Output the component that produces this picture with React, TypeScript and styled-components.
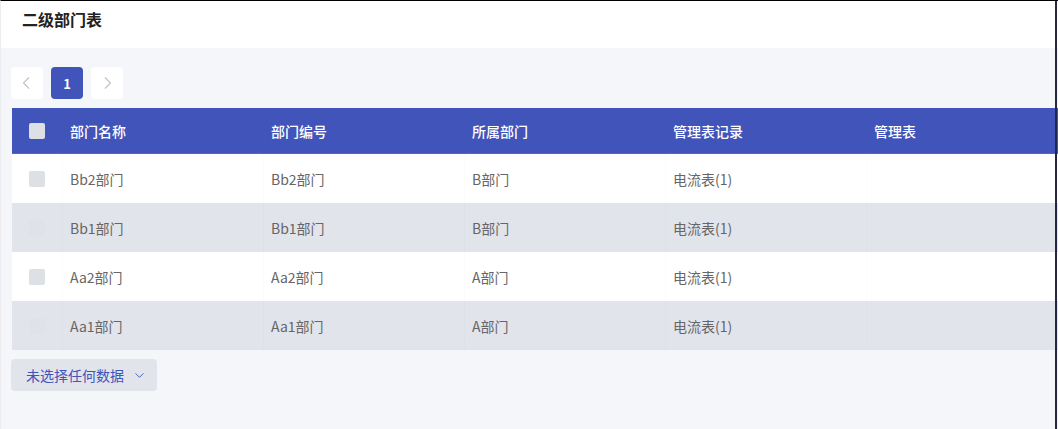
import styled, { createGlobalStyle } from "styled-components";

const GlobalStyle = createGlobalStyle`
  html, body {
    margin: 0;
    padding: 0;
    background: #f5f6fa;
  }
  body {
    font-family: "Noto Sans CJK SC", "Noto Sans", "Liberation Sans", sans-serif;
  }
  * { box-sizing: border-box; }
`;

type Row = { name: string; code: string; parent: string; record: string; table: string };

const rows: Row[] = [
    { name: "Bb2部门", code: "Bb2部门", parent: "B部门", record: "电流表(1)", table: "" },
    { name: "Bb1部门", code: "Bb1部门", parent: "B部门", record: "电流表(1)", table: "" },
    { name: "Aa2部门", code: "Aa2部门", parent: "A部门", record: "电流表(1)", table: "" },
    { name: "Aa1部门", code: "Aa1部门", parent: "A部门", record: "电流表(1)", table: "" },
];

const columns = ["部门名称", "部门编号", "所属部门", "管理表记录", "管理表"];

const Chevron = ({ dir, size = 12 }: { dir: "left" | "right" | "down"; size?: number }) => {
    const d = dir === "left" ? "M7.5 1.5 L3 6 L7.5 10.5" : dir === "right" ? "M4.5 1.5 L9 6 L4.5 10.5" : "M2 4 L6 8 L10 4";
    return (
        <svg width={size} height={size} viewBox="0 0 12 12" fill="none">
            <path d={d} stroke="currentColor" strokeWidth="1" strokeLinecap="round" strokeLinejoin="round"/>
        </svg>
    );
};

const App = () => {
    return (
        <Page>
            <GlobalStyle/>
            <Header>
                <Title>二级部门表</Title>
            </Header>
            <Body>
                <Pager>
                    <PageButton><Chevron dir="left" size={14}/></PageButton>
                    <PageButton isActive>1</PageButton>
                    <PageButton><Chevron dir="right" size={14}/></PageButton>
                </Pager>
                <TableWrap>
                    <HeadRow>
                        <CheckCell><Check/></CheckCell>
                        {columns.map(c => <HeadCell key={c}>{c}</HeadCell>)}
                    </HeadRow>
                    {rows.map((r, i) => (
                        <DataRow key={r.name} striped={i % 2 === 1}>
                            <CheckCell><Check faded={i % 2 === 1}/></CheckCell>
                            <Cell>{r.name}</Cell>
                            <Cell>{r.code}</Cell>
                            <Cell>{r.parent}</Cell>
                            <Cell>{r.record}</Cell>
                            <Cell>{r.table}</Cell>
                        </DataRow>
                    ))}
                </TableWrap>
                <SelectButton>
                    <span>未选择任何数据</span>
                    <Chevron dir="down" size={11}/>
                </SelectButton>
            </Body>
        </Page>
    );
}

export default App;


const Page = styled.div`
    width: 1058px;
    height: 429px;
    border-top: 1px solid #000;
    border-left: 1px solid #ececf0;
    overflow: hidden;
    position: relative;
    background: #f5f6fa;

    &::after {
        content: "";
        position: absolute;
        top: 0;
        right: 1px;
        width: 2px;
        height: 100%;
        background: #25263f;
    }
`;

const Header = styled.div`
    height: 47px;
    background: #fff;
    display: flex;
    align-items: center;
    padding-left: 21px;
    padding-bottom: 11px;
`;

const Title = styled.div`
    font-size: 16px;
    font-weight: 700;
    color: #222;
`;

const Body = styled.div`
    padding: 19px 0 0 10px;
`;

const Pager = styled.div`
    display: flex;
    gap: 8px;
`;

const PageButton = styled.div<{ isActive?: boolean }>`
    width: 32px;
    height: 32px;
    border-radius: 4px;
    background: #fff;
    color: #c0c4cc;
    display: flex;
    align-items: center;
    justify-content: center;
    font-size: 13px;
    font-weight: 700;

    ${props => props.isActive && `
        color: #fff;
        background: #4154b9;
    `}
`;

const TableWrap = styled.div`
    margin-top: 9px;
    margin-left: 1px;
    width: 1200px;
    display: flex;
    flex-direction: column;
`;

const HeadRow = styled.div`
    display: grid;
    grid-template-columns: 50px 201px 201px 201px 201px 1fr;
    height: 46px;
    background: #4154b9;
    border-bottom: 1px solid #5565c4;
`;

const DataRow = styled.div<{ striped?: boolean }>`
    display: grid;
    grid-template-columns: 50px 201px 201px 201px 201px 1fr;
    height: 49px;
    background: ${props => props.striped ? "#e2e4ec" : "#fff"};
`;

const CheckCell = styled.div`
    display: flex;
    align-items: center;
    padding-left: 17px;
`;

const Check = styled.div<{ faded?: boolean }>`
    width: 16px;
    height: 16px;
    border-radius: 2px;
    background: ${props => props.faded ? "#dfe2e8" : "#dde1e6"};
`;

const HeadCell = styled.div`
    display: flex;
    align-items: center;
    padding-left: 8px;
    color: #fff;
    font-size: 14px;
    font-weight: 500;
`;

const Cell = styled.div`
    display: flex;
    align-items: center;
    padding-left: 7px;
    color: #666;
    font-size: 14px;
    border-left: 1px solid rgba(0, 0, 0, .012);
`;

const SelectButton = styled.div`
    margin-top: 9px;
    width: 146px;
    height: 32px;
    border-radius: 4px;
    background: #e2e4ec;
    color: #4154b9;
    font-size: 14px;
    display: inline-flex;
    align-items: center;
    gap: 10px;
    padding-left: 15px;
`;
